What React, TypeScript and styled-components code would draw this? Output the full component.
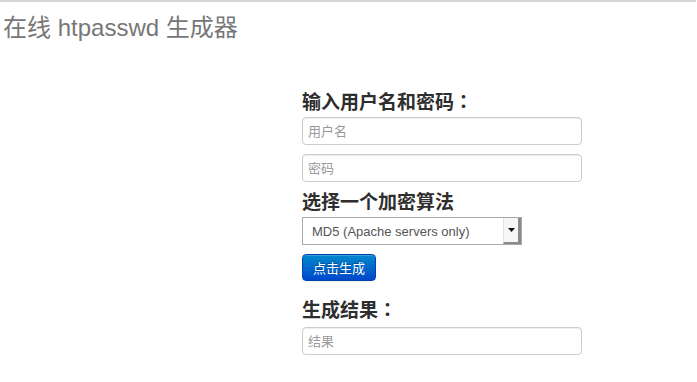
import styled, { createGlobalStyle } from 'styled-components';

const GlobalStyle = createGlobalStyle`
  html, body {
    margin: 0;
    padding: 0;
    background: #fff;
  }
  body {
    font-family: "Liberation Sans", Arial, "Noto Sans CJK SC", sans-serif;
    color: #333;
  }
`;

export default function App() {
  return (
    <>
      <GlobalStyle />
      <Page>
        <Title>在线 htpasswd 生成器</Title>
        <Form>
          <Heading>
            输入用户名和密码<Colon>：</Colon>
          </Heading>
          <Input placeholder="用户名" />
          <Input placeholder="密码" $gap={9} />
          <Heading $top={10}>选择一个加密算法</Heading>
          <Select>
            <SelectText>MD5 (Apache servers only)</SelectText>
            <SelectArrow>
              <svg width="7" height="4" viewBox="0 0 7 4">
                <path d="M0 0h7L3.5 4z" fill="#111" />
              </svg>
            </SelectArrow>
          </Select>
          <Button>点击生成</Button>
          <Heading $top={19} $bottom={5}>
            生成结果<Colon>：</Colon>
          </Heading>
          <Input placeholder="结果" />
        </Form>
      </Page>
    </>
  );
}

const Page = styled.div`
  border-top: 2px solid #d6d6d6;
  width: 696px;
  min-height: 380px;
`;

const Title = styled.h1`
  margin: 11px 0 0 3px;
  font-size: 24px;
  line-height: 30px;
  font-weight: normal;
  color: #777;
`;

const Form = styled.div`
  display: flex;
  flex-direction: column;
  align-items: flex-start;
  padding-left: 302px;
  margin-top: 49px;
`;

const Heading = styled.h4<{ $top?: number; $bottom?: number }>`
  margin: ${(p) => p.$top ?? 0}px 0 ${(p) => p.$bottom ?? 3}px;
  font-size: 19px;
  line-height: 22px;
  font-weight: bold;
  color: #2e2e2e;
  font-family: "Liberation Sans", "Noto Sans CJK SC", sans-serif;
`;

// full-width colon centred in its cell, as in the original
const Colon = styled.span`
  font-family: "Noto Sans CJK TC", sans-serif;
  line-height: 0;
`;

const Input = styled.input<{ $gap?: number }>`
  box-sizing: border-box;
  width: 280px;
  height: 28px;
  margin: ${(p) => p.$gap ?? 0}px 0 0;
  padding: 0 5px;
  border: 1px solid #ccc;
  border-radius: 4px;
  box-shadow: inset 0 1px 1px rgba(0, 0, 0, 0.075);
  font-size: 13px;
  font-family: "Liberation Sans", "Noto Sans CJK SC", sans-serif;
  color: #555;
  outline: none;

  &::placeholder {
    color: #999;
  }
`;

const Select = styled.div`
  box-sizing: border-box;
  display: flex;
  align-items: stretch;
  width: 220px;
  height: 28px;
  border: 1px solid #aaa;
  background: #fff;
`;

const SelectText = styled.div`
  flex: 1;
  display: flex;
  align-items: center;
  padding-left: 9px;
  font-size: 13px;
  color: #555;
`;

const SelectArrow = styled.div`
  width: 14px;
  display: flex;
  align-items: center;
  justify-content: center;
  background: #f6f6f6;
  border-left: 1px solid #e2e2e2;
  border-right: 3px solid #8a8a8a;
  border-bottom: 2px solid #8a8a8a;
`;

const Button = styled.button`
  margin-top: 9px;
  height: 27px;
  padding: 0 10px;
  border: 1px solid #0044aa;
  border-radius: 4px;
  background: linear-gradient(to bottom, #0088cc, #0048cc);
  box-shadow: inset 0 1px 0 rgba(255, 255, 255, 0.2), 0 1px 2px rgba(0, 0, 0, 0.05);
  color: #fff;
  font-size: 13px;
  font-family: "Liberation Sans", "Noto Sans CJK SC", sans-serif;
  text-shadow: 0 -1px 0 rgba(0, 0, 0, 0.25);
  cursor: pointer;
`;
